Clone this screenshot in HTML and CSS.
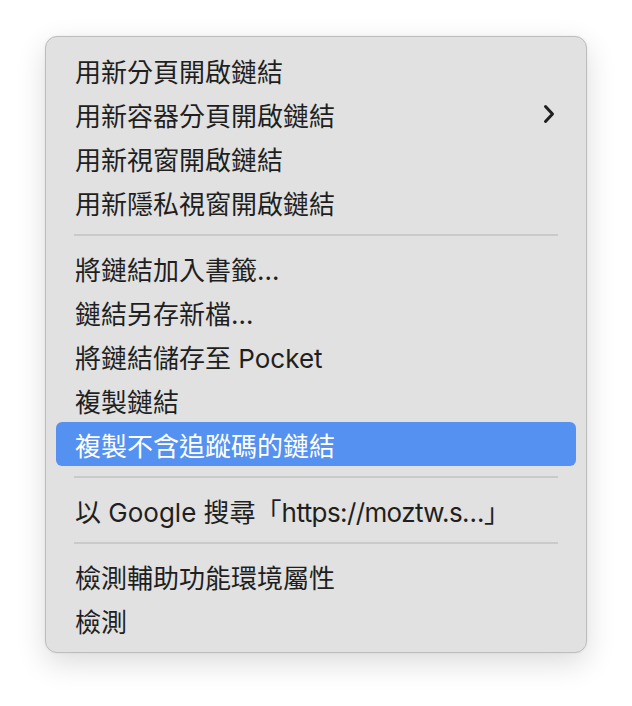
FILE: index.html
```html
<!DOCTYPE html>
<html lang="zh-Hant">
<head>
    <meta charset="UTF-8">
    <meta name="viewport" content="width=device-width, initial-scale=1.0">
    <title>右鍵選單</title>
    <link rel="stylesheet" href="styles.css">
</head>
<body>
    <div class="menu">
        <div class="item">用新分頁開啟鏈結</div>
        <div class="item">
            <span>用新容器分頁開啟鏈結</span>
            <svg class="chevron" width="12" height="20" viewBox="0 0 12 20">
                <path d="M2.5 2.5 L9.5 10 L2.5 17.5" />
            </svg>
        </div>
        <div class="item">用新視窗開啟鏈結</div>
        <div class="item">用新隱私視窗開啟鏈結</div>

        <div class="separator"></div>

        <div class="item">將鏈結加入書籤…</div>
        <div class="item">鏈結另存新檔…</div>
        <div class="item">將鏈結儲存至 Pocket</div>
        <div class="item">複製鏈結</div>
        <div class="item active">複製不含追蹤碼的鏈結</div>

        <div class="separator"></div>

        <div class="item"><span>以 Google 搜尋「<span class="url">https://moztw.s…</span>」</span></div>

        <div class="separator"></div>

        <div class="item">檢測輔助功能環境屬性</div>
        <div class="item">檢測</div>
    </div>
</body>
</html>
```

FILE: styles.css
```css
html, body {
    min-height: 100%;
}
body {
    margin: 0;
    min-height: 706px;
    padding: 36px 0 0 45px;
    box-sizing: border-box;
    background-color: #ffffff;
    font-family: Inter, "Noto Sans CJK TC", sans-serif;
}
.menu {
    width: 520px;
    padding: 11px 10px 10px;
    background-color: #e1e1e1;
    border: 1px solid #bdbdbd;
    border-radius: 12px;
    box-shadow: 0 10px 30px rgba(0, 0, 0, 0.14), 0 0 3px rgba(0, 0, 0, 0.06);
}
.item {
    display: flex;
    align-items: center;
    justify-content: space-between;
    height: 44px;
    padding: 0 21px 0 19px;
    border-radius: 6px;
    font-size: 26px;
    color: #1f1f1f;
    white-space: nowrap;
}
.item.active {
    background-color: #5591f1;
    color: #ffffff;
}
.url {
    letter-spacing: -0.6px;
}
.chevron path {
    fill: none;
    stroke: #1f1f1f;
    stroke-width: 3;
    stroke-linecap: round;
    stroke-linejoin: round;
}
.separator {
    height: 2px;
    margin: 10px 18px;
    background-color: #cacaca;
}
```
